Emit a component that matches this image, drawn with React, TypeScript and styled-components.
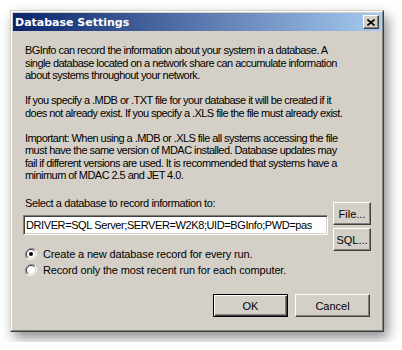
import React from "react";
import styled, { createGlobalStyle } from "styled-components";

const Global = createGlobalStyle`
  html, body { margin: 0; padding: 0; background: #ffffff; }
  body { padding: 10px; font-family: "Liberation Sans", Arial, sans-serif; }
`;

const Window = styled.div`
  box-sizing: border-box;
  width: 374px;
  height: 322px;
  background: #d4d0c8;
  border: 1px solid;
  border-color: #d4d0c8 #404040 #404040 #d4d0c8;
  box-shadow: 4px 6px 12px rgba(0, 0, 0, 0.45);
  display: flex;
  flex-direction: column;
`;

const Frame = styled.div`
  flex: 1;
  border: 1px solid;
  border-color: #ffffff #808080 #808080 #ffffff;
  padding: 1px;
  display: flex;
  flex-direction: column;
`;

const TitleBar = styled.div`
  height: 18px;
  background: linear-gradient(to right, #0a246a, #a6caf0);
  display: flex;
  align-items: center;
  justify-content: space-between;
  padding: 0 2px 0 2px;
`;

const Title = styled.span`
  color: #ffffff;
  font-family: "DejaVu Sans", Verdana, sans-serif;
  font-weight: bold;
  font-size: 11px;
`;

const CloseButton = styled.div`
  box-sizing: border-box;
  width: 16px;
  height: 14px;
  background: #d4d0c8;
  border: 1px solid;
  border-color: #ffffff #404040 #404040 #ffffff;
  box-shadow: inset -1px -1px 0 #808080;
  display: flex;
  align-items: center;
  justify-content: center;
`;

const Body = styled.div`
  flex: 1;
  padding: 13px 10px 0 10px;
  display: flex;
  flex-direction: column;
  font-size: 11px;
  letter-spacing: -0.55px;
  color: #000000;
`;

const Para = styled.p`
  margin: 0 0 12.5px 2px;
  line-height: 12.5px;
  white-space: nowrap;
`;

const Label = styled.div`
  margin: 0 0 0 2px;
  line-height: 13px;
  letter-spacing: -0.4px;
`;

const SelectRow = styled.div`
  margin-top: 3px;
  display: flex;
  gap: 5px;
  align-items: flex-start;
`;

const InputCol = styled.div`
  flex: 1;
  min-width: 0;
  display: flex;
  flex-direction: column;
`;

const TextBox = styled.div`
  margin-top: 5px;
  box-sizing: border-box;
  height: 20px;
  background: #ffffff;
  border: 1px solid;
  border-color: #808080 #ffffff #ffffff #808080;
  box-shadow: inset 1px 1px 0 #404040, inset -1px -1px 0 #d4d0c8;
  padding: 0 0 0 2px;
  display: flex;
  align-items: center;
  overflow: hidden;
  white-space: nowrap;
  letter-spacing: -0.4px;
`;

const SideButtons = styled.div`
  display: flex;
  flex-direction: column;
  gap: 3px;
  margin-top: 5px;
`;

const Button = styled.div<{ $w: number; $default?: boolean }>`
  box-sizing: border-box;
  width: ${(p) => p.$w}px;
  height: 23px;
  background: #d4d0c8;
  display: flex;
  align-items: center;
  justify-content: center;
  letter-spacing: 0;
  border: 1px solid;
  border-color: ${(p) =>
    p.$default ? "#000000" : "#ffffff #404040 #404040 #ffffff"};
  box-shadow: ${(p) =>
    p.$default
      ? "inset 1px 1px 0 #ffffff, inset -1px -1px 0 #404040, inset -2px -2px 0 #808080"
      : "inset -1px -1px 0 #808080"};
`;

const Radios = styled.div`
  display: flex;
  flex-direction: column;
  gap: 3px;
  margin-top: 12px;
  margin-left: 2px;
`;

const RadioRow = styled.div`
  display: flex;
  align-items: center;
  gap: 6px;
  height: 13px;
  white-space: nowrap;
  letter-spacing: -0.15px;
`;

const Footer = styled.div`
  margin-top: auto;
  display: flex;
  justify-content: flex-end;
  gap: 7px;
  padding: 0 1px 12px 0;
`;

const Radio = ({ checked }: { checked?: boolean }) => (
  <svg width="12" height="12" viewBox="0 0 12 12">
    <path d="M10.2 1.8 A6 6 0 0 0 1.8 10.2" fill="none" stroke="#808080" strokeWidth="1" />
    <path d="M10.2 1.8 A6 6 0 0 1 1.8 10.2" fill="none" stroke="#ffffff" strokeWidth="1" />
    <circle cx="6" cy="6" r="4.5" fill="#ffffff" />
    <path d="M9.2 2.8 A4.5 4.5 0 0 0 2.8 9.2" fill="none" stroke="#404040" strokeWidth="1" />
    <path d="M9.2 2.8 A4.5 4.5 0 0 1 2.8 9.2" fill="none" stroke="#d4d0c8" strokeWidth="1" />
    {checked && <circle cx="6" cy="6" r="2" fill="#000000" />}
  </svg>
);

export default function App() {
  return (
    <>
      <Global />
      <Window>
        <Frame>
          <TitleBar>
            <Title>Database Settings</Title>
            <CloseButton>
              <svg width="8" height="7" viewBox="0 0 8 7">
                <path d="M0.5 0.5 L7.5 6.5 M7.5 0.5 L0.5 6.5" stroke="#000" strokeWidth="1.6" />
              </svg>
            </CloseButton>
          </TitleBar>
          <Body>
            <Para>
              BGInfo can record the information about your system in a database. A
              <br />
              single database located on a network share can accumulate information
              <br />
              about systems throughout your network.
            </Para>
            <Para>
              If you specify a .MDB or .TXT file for your database it will be created if it
              <br />
              does not already exist. If you specify a .XLS file the file must already exist.
            </Para>
            <Para>
              Important: When using a .MDB or .XLS file all systems accessing the file
              <br />
              must have the same version of MDAC installed. Database updates may
              <br />
              fail if different versions are used. It is recommended that systems have a
              <br />
              minimum of MDAC 2.5 and JET 4.0.
            </Para>
            <SelectRow>
              <InputCol>
                <Label>Select a database to record information to:</Label>
                <TextBox>DRIVER=SQL Server;SERVER=W2K8;UID=BGInfo;PWD=pas</TextBox>
                <Radios>
                  <RadioRow>
                    <Radio checked />
                    Create a new database record for every run.
                  </RadioRow>
                  <RadioRow>
                    <Radio />
                    Record only the most recent run for each computer.
                  </RadioRow>
                </Radios>
              </InputCol>
              <SideButtons>
                <Button $w={38}>File...</Button>
                <Button $w={38}>SQL...</Button>
              </SideButtons>
            </SelectRow>
            <Footer>
              <Button $w={75} $default>OK</Button>
              <Button $w={75}>Cancel</Button>
            </Footer>
          </Body>
        </Frame>
      </Window>
    </>
  );
}
